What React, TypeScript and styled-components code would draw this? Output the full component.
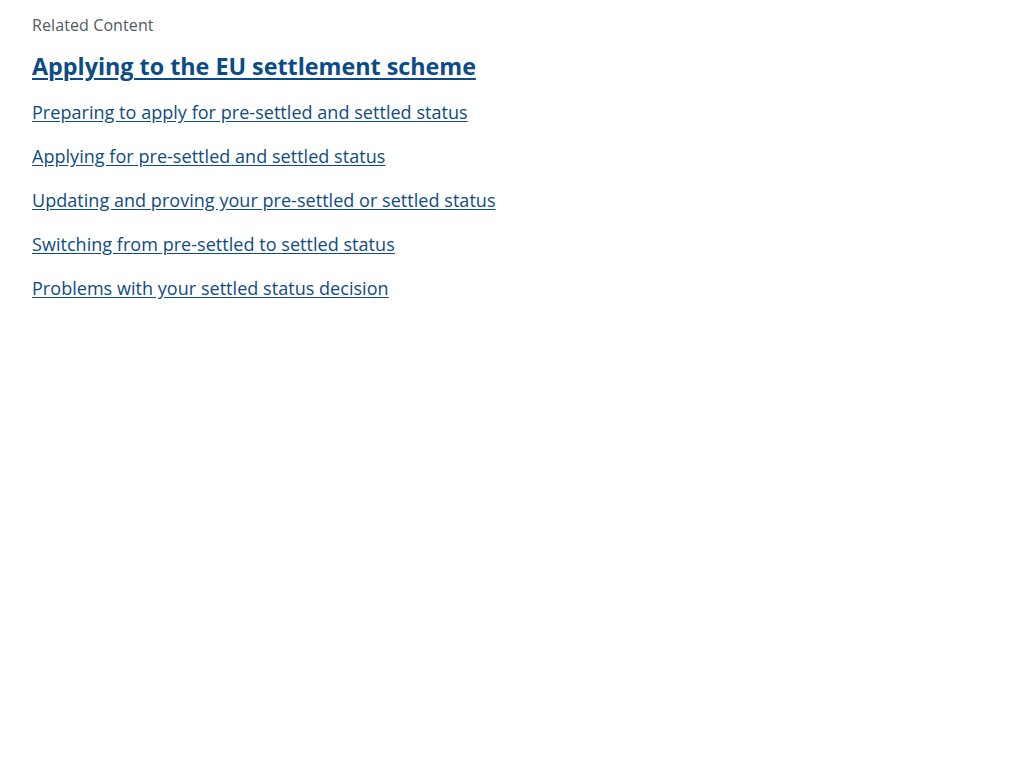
import { createGlobalStyle } from 'styled-components';
import styled from 'styled-components';

const GlobalStyle = createGlobalStyle`
  html, body {
    margin: 0;
    padding: 0;
    background: #ffffff;
  }
  body {
    font-family: 'Open Sans', 'Liberation Sans', sans-serif;
  }
`;

const Section = styled.section`
  padding: 13px 32px 0 32px;
`;

const Label = styled.div`
  font-size: 16px;
  line-height: 24px;
  color: #505a5f;
  letter-spacing: 0.1px;
`;

const Heading = styled.h2`
  margin: 13px 0 16px 0;
  font-size: 23.3px;
  line-height: 32px;
  font-weight: 700;

  a {
    color: #0b4b87;
    text-decoration: underline;
    text-decoration-thickness: 2px;
    text-underline-offset: 3px;
  }
`;

const LinkList = styled.ul`
  list-style: none;
  margin: 0;
  padding: 0;
  display: flex;
  flex-direction: column;
  gap: 16px;
`;

const Item = styled.li`
  font-size: 18px;
  line-height: 28px;
  letter-spacing: 0.04px;
`;

const Link = styled.a`
  color: #0f4b85;
  text-decoration: underline;
  text-underline-offset: 2px;
`;

const links = [
  'Preparing to apply for pre-settled and settled status',
  'Applying for pre-settled and settled status',
  'Updating and proving your pre-settled or settled status',
  'Switching from pre-settled to settled status',
  'Problems with your settled status decision',
];

export default function App() {
  return (
    <>
      <GlobalStyle />
      <Section>
        <Label>Related Content</Label>
        <Heading>
          <a href="#">Applying to the EU settlement scheme</a>
        </Heading>
        <LinkList>
          {links.map((text) => (
            <Item key={text}>
              <Link href="#">{text}</Link>
            </Item>
          ))}
        </LinkList>
      </Section>
    </>
  );
}
